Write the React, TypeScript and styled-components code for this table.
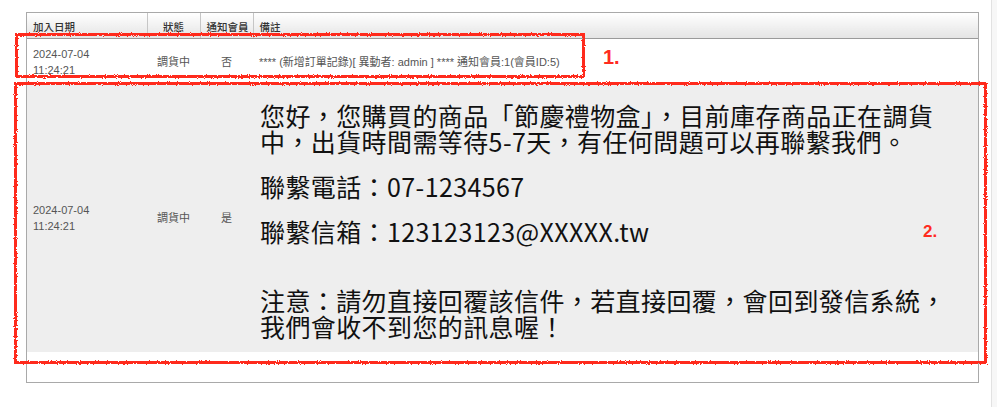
import React from 'react';
import styled, { createGlobalStyle } from 'styled-components';

const GlobalStyle = createGlobalStyle`
    html, body {
        margin : 0;
        padding : 0;
        background : #fff;
    }
    body {
        font-family : "Liberation Sans", "Noto Sans CJK TC", sans-serif;
        color : #333;
    }
`;

const Page = styled.div`
    position : relative;
    width : 997px;
    height : 407px;
    display : flex;
    box-sizing: border-box;
    overflow : hidden;
`;

const Content = styled.div`
    flex : 1;
    padding : 12px 12px 0 26px;
`;

const ScrollTrack = styled.div`
    width : 5px;
    border-left : 1px solid #e2e2e2;
    background : #f7f7f7;
`;

const Frame = styled.div`
    border : 1px solid #a9a9a9;
    padding-bottom : 30px;
`;

const Table = styled.table`
    width : 100%;
    border-collapse : collapse;
    table-layout : fixed;
    font-size : 11px;
`;

const HeadCell = styled.th<{ $align?: string }>`
    height : 23px;
    padding : 2px 6px 0;
    text-align : ${({ $align }) => $align || 'left'};
    font-weight : 500;
    font-size : 10.5px;
    color : #333;
    background : linear-gradient(#ffffff, #e4e4e4);
    border-bottom : 1px solid #9a9a9a;
    border-left : 1px solid #c6c6c6;
    white-space : nowrap;
    &:first-child{
        border-left : none;
    }
`;

const Row = styled.tr<{ $shade?: boolean }>`
    background : ${({ $shade }) => ($shade ? '#eeeeee' : '#ffffff')};
`;

const Cell = styled.td<{ $align?: string }>`
    padding : 0 6px;
    height : 45px;
    vertical-align : middle;
    text-align : ${({ $align }) => $align || 'left'};
    color : #555;
    line-height : 16px;
    white-space : nowrap;
`;

const MessageCell = styled.td`
    padding : 18px 22px 13px 7px;
    vertical-align : top;
    font-family : "Noto Sans CJK TC", "Liberation Sans", sans-serif;
    font-size : 25px;
    letter-spacing : 0.4px;
    font-weight : 400;
    line-height : 26px;
    color : #111;
`;

const Para = styled.p`
    margin : 0 0 19px;
    &:last-child{
        margin-bottom : 0;
    }
`;

const Blank = styled.div`
    height : 24px;
`;

const Marks = styled.div`
    position : absolute;
    inset : 0;
    pointer-events : none;
`;

const MarkBox = styled.div<{ $left: number; $top: number; $w: number; $h: number }>`
    position : absolute;
    left : ${({ $left }) => $left}px;
    top : ${({ $top }) => $top}px;
    width : ${({ $w }) => $w}px;
    height : ${({ $h }) => $h}px;
    box-sizing : border-box;
    border : 3px solid #ff2b1f;
    filter : url(#rough);
`;

const MarkLabel = styled.span<{ $left: number; $top: number; $size: number }>`
    position : absolute;
    left : ${({ $left }) => $left}px;
    top : ${({ $top }) => $top}px;
    font-family : "Liberation Sans", sans-serif;
    font-size : ${({ $size }) => $size}px;
    line-height : 1;
    font-weight : 700;
    color : #ff2b1f;
`;

function App() {
    return (
        <Page>
            <GlobalStyle />
            <svg width="0" height="0" style={{ position: 'absolute' }}>
                <filter id="rough">
                    <feTurbulence type="fractalNoise" baseFrequency="0.9" numOctaves="2" seed="3" />
                    <feDisplacementMap in="SourceGraphic" scale="3" />
                </filter>
            </svg>
            <Content>
                <Frame>
                    <Table>
                        <colgroup>
                            <col style={{ width: 120 }} />
                            <col style={{ width: 53 }} />
                            <col style={{ width: 53 }} />
                            <col />
                        </colgroup>
                        <thead>
                            <tr>
                                <HeadCell>加入日期</HeadCell>
                                <HeadCell $align='center'>狀態</HeadCell>
                                <HeadCell $align='center'>通知會員</HeadCell>
                                <HeadCell>備註</HeadCell>
                            </tr>
                        </thead>
                        <tbody>
                            <Row>
                                <Cell>2024-07-04<br />11:24:21</Cell>
                                <Cell $align='center'>調貨中</Cell>
                                <Cell $align='center'>否</Cell>
                                <Cell>**** (新增訂單記錄)[ 異動者: admin ] **** 通知會員:1(會員ID:5)</Cell>
                            </Row>
                            <Row $shade>
                                <Cell>2024-07-04<br />11:24:21</Cell>
                                <Cell $align='center'>調貨中</Cell>
                                <Cell $align='center'>是</Cell>
                                <MessageCell>
                                    <Para>您好，您購買的商品「節慶禮物盒」，目前庫存商品正在調貨中，出貨時間需等待5-7天，有任何問題可以再聯繫我們。</Para>
                                    <Para>聯繫電話：07-1234567</Para>
                                    <Para>聯繫信箱：123123123@XXXXX.tw</Para>
                                    <Blank />
                                    <Para>注意：請勿直接回覆該信件，若直接回覆，會回到發信系統，我們會收不到您的訊息喔！</Para>
                                </MessageCell>
                            </Row>
                        </tbody>
                    </Table>
                </Frame>
            </Content>
            <ScrollTrack />
            <Marks>
                <MarkBox $left={15} $top={33} $w={570} $h={45} />
                <MarkLabel $left={603} $top={47} $size={20}>1.</MarkLabel>
                <MarkBox $left={14} $top={82} $w={973} $h={282} />
                <MarkLabel $left={923} $top={223} $size={17}>2.</MarkLabel>
            </Marks>
        </Page>
    );
}

export default App;
